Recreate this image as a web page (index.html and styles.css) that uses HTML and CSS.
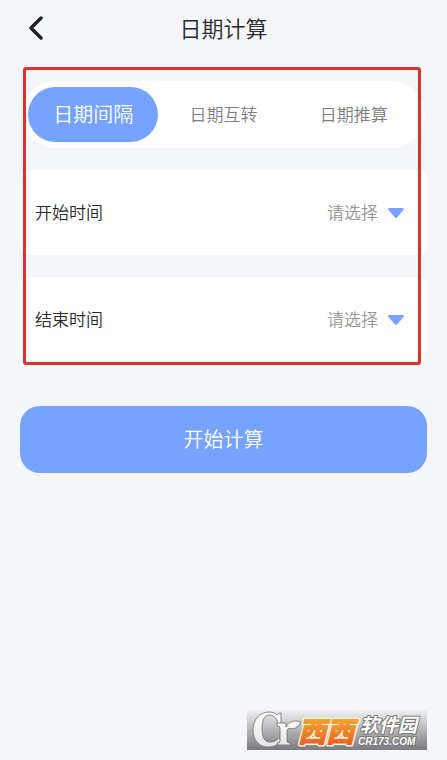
FILE: index.html
```html
<!DOCTYPE html>
<html lang="zh-CN">
<head>
<meta charset="utf-8">
<meta name="viewport" content="width=device-width, initial-scale=1">
<title>日期计算</title>
<link rel="stylesheet" href="styles.css">
</head>
<body>
<header class="bar">
  <button class="back" type="button" aria-label="返回">
    <svg width="16" height="24" viewBox="0 0 16 24"><path d="M13 2 3 12l10 10" fill="none" stroke="#202124" stroke-width="3.4" stroke-linecap="round" stroke-linejoin="round"/></svg>
  </button>
  <h1 class="title">日期计算</h1>
</header>
<main class="content">
  <div class="form">
    <nav class="tabs">
      <button class="tab tab-active" type="button">日期间隔</button>
      <button class="tab" type="button">日期互转</button>
      <button class="tab" type="button">日期推算</button>
    </nav>
    <div class="row">
      <label class="name" for="start">开始时间</label>
      <select class="picker" id="start"><option>请选择</option></select>
      <svg class="arrow" width="16" height="10" viewBox="0 0 16 10"><path d="M1.3 0h13.4q2 .4.7 2L9.300 9.200q-1.300 1.300-2.600 0L.6 2Q-.7.4 1.300 0z" fill="#75a3ff"/></svg>
    </div>
    <div class="row">
      <label class="name" for="end">结束时间</label>
      <select class="picker" id="end"><option>请选择</option></select>
      <svg class="arrow" width="16" height="10" viewBox="0 0 16 10"><path d="M1.3 0h13.4q2 .4.7 2L9.300 9.200q-1.300 1.300-2.600 0L.6 2Q-.7.4 1.300 0z" fill="#75a3ff"/></svg>
    </div>
    <div class="frame"></div>
  </div>
  <button class="submit" type="button">开始计算</button>
</main>
<footer class="foot">
  <svg class="mark" width="180" height="40" viewBox="0 0 180 40">
    <defs>
      <linearGradient id="bg" x2="0" y2="1"><stop offset="0" stop-color="#f0f1f3"/><stop offset=".5" stop-color="#b5b5b7"/><stop offset="1" stop-color="#7b7b7d"/></linearGradient>
      <linearGradient id="fire" x2="0" y2="1"><stop offset="0" stop-color="#f3b832"/><stop offset=".5" stop-color="#ee8a2b"/><stop offset="1" stop-color="#e3502a"/></linearGradient>
      <linearGradient id="pale" x2="0" y2="1"><stop offset="0" stop-color="#fff"/><stop offset="1" stop-color="#e4e4e6"/></linearGradient>
    </defs>
    <rect width="180" height="40" fill="url(#bg)"/>
    <g fill="url(#pale)" stroke="#77777a" stroke-width=".9" stroke-linejoin="round">
      <path d="M34 3v13h-2C30 9 27 5 23 5c-6 0-8 6-8 14 0 9 3 13 8 13 4 0 6-1 9-4l2 2c-3 5-7 7-13 7C11 37 6 29 6 20 6 10 12 2 22 2c4 0 6 1 8 3l2-2z"/>
      <path d="M30 13h9v4c3-6 9-7 15-5-3 6-8 8-12 6-2 1-2 3-2 5v8q0 2 3 2v2H30v-2q3 0 3-2V18q0-2-3-2z"/>
    </g>
    <g class="mark-brand">
      <text x="51" y="32" fill="#fff3d8" stroke="#fff3d8" stroke-width="4" stroke-linejoin="round">西西</text>
      <text x="51" y="32" fill="url(#fire)" stroke="url(#fire)" stroke-width="1">西西</text>
    </g>
    <g fill="#fff" stroke="#77777a" stroke-width="2" stroke-linejoin="round" paint-order="stroke">
      <text class="mark-name" x="113" y="22">软件园</text>
      <text class="mark-site" x="111" y="35">CR173.COM</text>
    </g>
  </svg>
</footer>
</body>
</html>
```
FILE: styles.css
```css
* {
  box-sizing: border-box;
}

body {
  margin: 0;
  min-height: 100vh;
  display: flex;
  flex-direction: column;
  background: #f4f6fa;
  color: #28292c;
  font-family: "Noto Sans CJK SC", sans-serif;
  font-weight: 350;
}

button,
select {
  margin: 0;
  padding: 0;
  border: 0;
  background: transparent;
  font: inherit;
  color: inherit;
}

.bar {
  display: grid;
  grid-template-columns: 32px 1fr 32px;
  align-items: center;
  height: 56px;
  padding: 0 20px;
}

.back {
  display: flex;
  justify-content: center;
  padding: 4px 0;
}

.title {
  margin: 0;
  padding-bottom: 2px;
  font-size: 22px;
  line-height: 32px;
  font-weight: 350;
  text-align: center;
}

.content {
  padding: 10px 20px 0;
}

.form {
  position: relative;
  display: flex;
  flex-direction: column;
  gap: 22px;
  padding: 15px 0 4px;
}

.tabs {
  display: flex;
  margin: 0 2px;
  padding: 6px;
  border-radius: 34px;
  background: #fff;
}

.tab {
  flex: 1;
  height: 55px;
  padding-bottom: 2px;
  border-radius: 28px;
  font-size: 17px;
  color: #808080;
}

.tab-active {
  background: #75a3ff;
  color: #fff;
  font-size: 20px;
}

.row {
  display: flex;
  align-items: center;
  height: 85px;
  padding: 0 23px 0 15px;
  border-radius: 8px;
  background: #fff;
  font-size: 17px;
}

.name {
  padding-bottom: 2px;
}

.picker {
  flex: 1;
  height: 40px;
  margin-right: 10px;
  padding-bottom: 2px;
  appearance: none;
  text-align-last: right;
  color: #969696;
}

.frame {
  position: absolute;
  inset: 1px 6px 1px 3px;
  border: 3px solid #dc322c;
  border-radius: 3px;
  pointer-events: none;
}

.submit {
  display: block;
  width: 100%;
  height: 67px;
  margin-top: 40px;
  padding-bottom: 2px;
  border-radius: 20px;
  background: #75a3ff;
  color: #fff;
  font-size: 20px;
}

.foot {
  display: flex;
  justify-content: flex-end;
  margin-top: auto;
  padding: 0 20px 10px;
}

.mark-brand {
  font-size: 28px;
  font-weight: 900;
  font-style: italic;
}

.mark-name {
  font-size: 19px;
  font-weight: 700;
  font-style: italic;
}

.mark-site {
  font-family: "Liberation Sans", sans-serif;
  font-size: 10px;
  font-weight: 700;
  font-style: italic;
}
```
